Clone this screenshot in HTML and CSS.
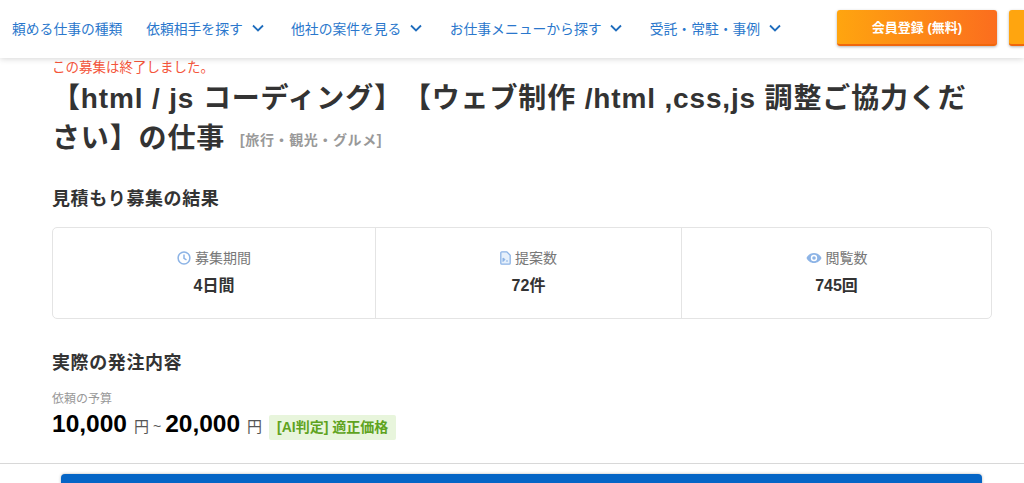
FILE: index.html
```html
<!DOCTYPE html>
<html lang="ja">
<head>
    <meta charset="UTF-8">
    <meta name="viewport" content="width=device-width, initial-scale=1.0">
    <title>見積もり募集の結果</title>
    <link rel="stylesheet" href="styles.css">
</head>
<body>
    <header class="header">
        <nav class="nav">
            <a class="nav-item nav-item-plain" href="#">頼める仕事の種類</a>
            <a class="nav-item" href="#">依頼相手を探す
                <svg class="chevron" viewBox="0 0 12 8"><path d="M1 1.500l5 5 5-5"/></svg></a>
            <a class="nav-item" href="#">他社の案件を見る
                <svg class="chevron" viewBox="0 0 12 8"><path d="M1 1.500l5 5 5-5"/></svg></a>
            <a class="nav-item" href="#">お仕事メニューから探す
                <svg class="chevron" viewBox="0 0 12 8"><path d="M1 1.500l5 5 5-5"/></svg></a>
            <a class="nav-item" href="#">受託・常駐・事例
                <svg class="chevron" viewBox="0 0 12 8"><path d="M1 1.500l5 5 5-5"/></svg></a>
        </nav>
        <a class="cta" href="#">会員登録 (無料)</a>
        <a class="cta cta-next" href="#"></a>
    </header>

    <main class="main">
        <p class="closed">この募集は終了しました。</p>
        <h1 class="title">【html / js コーディング】【ウェブ制作 /html ,css,js 調整ご協力ください】の仕事<small class="category">[旅行・観光・グルメ]</small></h1>

        <h2 class="section-title section-result">見積もり募集の結果</h2>
        <div class="stats">
            <div class="stat stat-period">
                <div class="stat-label">
                    <svg class="stat-icon" viewBox="0 0 14 14"><circle cx="7" cy="7" r="5.900"/><path d="M7 3.500V7.400L9.500 8.800"/></svg>
                    募集期間
                </div>
                <div class="stat-value">4日間</div>
            </div>
            <div class="stat stat-count">
                <div class="stat-label">
                    <svg class="stat-icon stat-icon-doc" viewBox="0 0 11 14"><path class="doc" d="M.8 1.800a1 1 0 0 1 1-1h5l3.400 3.400v8a1 1 0 0 1-1 1h-7.400a1 1 0 0 1-1-1z"/><path class="doc-mark" d="M3 10.500V7l2 1.500L3 10.500zM6 10h2"/></svg>
                    提案数
                </div>
                <div class="stat-value">72件</div>
            </div>
            <div class="stat stat-views">
                <div class="stat-label">
                    <svg class="stat-icon stat-icon-wide" viewBox="0 0 16 12"><path class="eye" fill-rule="evenodd" d="M8 1C4.500 1 1.700 3.300.5 6c1.200 2.700 4 5 7.500 5s6.300-2.300 7.500-5C14.300 3.300 11.500 1 8 1zm0 8.200A3.200 3.200 0 1 1 8 2.800a3.200 3.200 0 0 1 0 6.400z"/><circle class="eye" cx="8" cy="6" r="1.800"/></svg>
                    閲覧数
                </div>
                <div class="stat-value">745回</div>
            </div>
        </div>

        <h2 class="section-title section-order">実際の発注内容</h2>
        <div class="budget-label">依頼の予算</div>
        <div class="budget">
            <span class="amount">10,000</span>
            <span class="unit">円</span>
            <span class="tilde">~</span>
            <span class="amount">20,000</span>
            <span class="unit">円</span>
            <span class="ai-tag">[AI判定] 適正価格</span>
        </div>
    </main>

    <footer class="footer">
        <a class="footer-btn" href="#"></a>
    </footer>
</body>
</html>
```

FILE: styles.css
```css
* {
    box-sizing: border-box;
}

html, body {
    height: 483px;
    overflow: hidden;
}

body {
    margin: 0;
    background: #fff;
    color: #333;
    font-family: "Liberation Sans", "Noto Sans CJK JP", sans-serif;
    text-spacing-trim: space-all;
}

a {
    text-decoration: none;
}

.header {
    display: flex;
    align-items: center;
    height: 58px;
    padding-left: 12px;
    background: #fff;
    box-shadow: 0 1px 6px rgba(0, 0, 0, 0.16);
    position: relative;
}

.nav {
    display: flex;
    gap: 27.3px;
    width: 825px;
    flex-shrink: 0;
    margin-top: -2px;
}

.nav-item {
    display: flex;
    align-items: center;
    gap: 9px;
    color: #2a77cc;
    font-size: 13.8px;
    white-space: nowrap;
}

.nav-item-plain {
    margin-right: -3.5px;
}

.chevron {
    width: 12px;
    height: 8px;
    fill: none;
    stroke: #1f6dbd;
    stroke-width: 1.8;
}

.cta {
    flex: 0 0 160px;
    height: 36px;
    margin-top: -2px;
    border-radius: 3px;
    border-bottom: 2px solid #f0660c;
    background: linear-gradient(90deg, #ffa50f, #fb6d1e);
    box-shadow: 0 1px 3px rgba(0, 0, 0, 0.3);
    color: #fff;
    font-size: 13px;
    font-weight: bold;
    line-height: 36px;
    text-align: center;
}

.cta-next {
    flex: 1;
    margin-left: 12px;
    border-radius: 3px 0 0 3px;
    background: #ffa50f;
}

.main {
    padding: 0 32px 0 52px;
    height: 405px;
}

.closed {
    margin: 0;
    color: #f4553b;
    font-size: 13.5px;
    line-height: 20px;
}

.title {
    margin: 1px 0 0;
    font-size: 28px;
    line-height: 40px;
    letter-spacing: 0.85px;
}

.category {
    margin-left: 15px;
    color: #999;
    font-size: 14px;
    font-weight: bold;
    letter-spacing: 0.6px;
    vertical-align: 3px;
}

.section-title {
    margin: 0;
    font-size: 18px;
    line-height: 24px;
    letter-spacing: 0.6px;
}

.section-result {
    margin-top: 27px;
}

.stats {
    display: flex;
    height: 92px;
    margin-top: 16px;
    border: 1px solid #e4e4e4;
    border-radius: 5px;
}

.stat {
    padding-top: 20px;
    text-align: center;
}

.stat-period {
    width: 322px;
}

.stat-count {
    width: 306px;
    border-left: 1px solid #e4e4e4;
}

.stat-views {
    flex: 1;
    border-left: 1px solid #e4e4e4;
}

.stat-label {
    display: flex;
    align-items: center;
    justify-content: center;
    gap: 4px;
    color: #777;
    font-size: 14px;
    line-height: 20px;
}

.stat-icon {
    width: 14px;
    height: 14px;
    fill: none;
    stroke: #8db4e6;
    stroke-width: 1.5;
}

.stat-icon-doc {
    width: 11px;
}

.stat-icon-wide {
    width: 16px;
    height: 12px;
}

.stat-icon .doc {
    fill: #e6f0fb;
    stroke: #8db4e6;
    stroke-width: 1.3;
}

.stat-icon .doc-mark {
    fill: #8db4e6;
    stroke: #8db4e6;
    stroke-width: 1;
}

.stat-icon .eye {
    fill: #8db4e6;
    stroke: none;
}

.stat-value {
    margin-top: 7.500px;
    font-size: 16px;
    font-weight: bold;
    line-height: 20px;
}

.section-order {
    margin-top: 32px;
}

.budget-label {
    margin-top: 15px;
    color: #999;
    font-size: 12px;
    line-height: 18px;
}

.budget {
    display: flex;
    align-items: center;
    height: 26px;
    margin-top: 3px;
    white-space: nowrap;
}

.amount {
    color: #000;
    font-size: 24.5px;
    font-weight: bold;
}

.unit {
    margin: 3px 0 0 7px;
    color: #555;
    font-size: 15px;
}

.tilde {
    margin: 3px 4px 0;
    color: #555;
    font-size: 14px;
}

.ai-tag {
    margin: 7px 0 0 7px;
    padding: 0 8px;
    background: #e8f5dc;
    border-radius: 2px;
    color: #5fa31e;
    font-size: 14px;
    font-weight: bold;
    line-height: 25px;
}

.footer {
    height: 20px;
    padding: 10px 42px 0 61px;
    border-top: 1px solid #d8d8d8;
}

.footer-btn {
    display: block;
    height: 20px;
    border-radius: 4px 4px 0 0;
    background: #0565c6;
    box-shadow: 0 0 3px rgba(0, 0, 0, 0.3);
}
```
